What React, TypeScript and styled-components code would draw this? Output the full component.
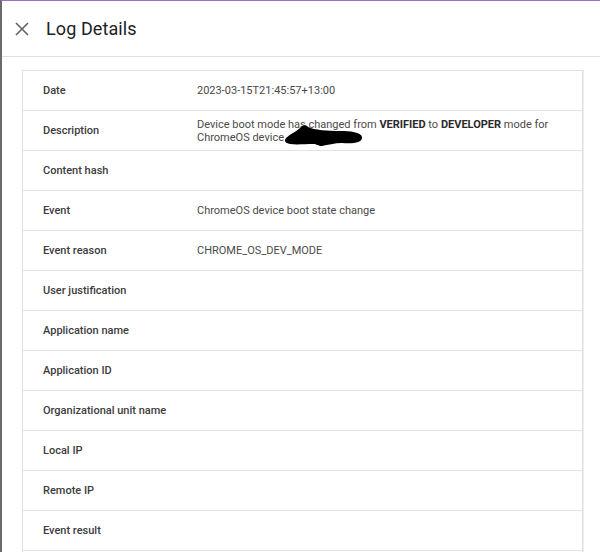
import styled, { createGlobalStyle } from "styled-components";

const GlobalStyle = createGlobalStyle`
  html, body {
    margin: 0;
    padding: 0;
    background: #ffffff;
  }
  body {
    font-family: Roboto, "Liberation Sans", Arial, sans-serif;
  }
`;

const rows: { label: string; value?: React.ReactNode }[] = [
  { label: "Date", value: "2023-03-15T21:45:57+13:00" },
  {
    label: "Description",
    value: (
      <>
        Device boot mode has changed from <b>VERIFIED</b> to <b>DEVELOPER</b> mode for
        <br />
        ChromeOS device <Redacted />
      </>
    ),
  },
  { label: "Content hash" },
  { label: "Event", value: "ChromeOS device boot state change" },
  { label: "Event reason", value: "CHROME_OS_DEV_MODE" },
  { label: "User justification" },
  { label: "Application name" },
  { label: "Application ID" },
  { label: "Organizational unit name" },
  { label: "Local IP" },
  { label: "Remote IP" },
  { label: "Event result" },
  { label: "" },
];

// hand-drawn redaction blob over the device id
function Redacted() {
  return (
    <Scribble>
      <svg width="80" height="24" viewBox="0 0 80 24">
        <path
          d="M2 15 C6 11 12 9 16 5 C18 2 22 1 24 4 C30 7 44 8 56 8 C66 8 77 9 78 14 C79 20 68 21 58 20 C50 20 44 22 38 23 C34 23 33 21 29 21 C22 21 12 22 6 21 C1 20 0 18 2 15 Z"
          fill="#000"
        />
      </svg>
    </Scribble>
  );
}

function App() {
  return (
    <>
      <GlobalStyle />
      <Page>
        <Header>
          <CloseButton aria-label="close">
            <svg width="14" height="14" viewBox="0 0 14 14">
              <path d="M1 1 L13 13 M13 1 L1 13" stroke="#5f6368" strokeWidth="1.6" fill="none" />
            </svg>
          </CloseButton>
          <Title>Log Details</Title>
        </Header>
        <Content>
          <Card>
            {rows.map((r, i) => (
              <Row key={i}>
                <Label>{r.label}</Label>
                <Value>{r.value}</Value>
              </Row>
            ))}
          </Card>
        </Content>
      </Page>
    </>
  );
}

export default App;

const Page = styled.div`
  height: 552px;
  overflow: hidden;
  border-top: 1px solid #9b6fc4;
  border-left: 2px solid #6b6b6b;
  box-sizing: border-box;
  background: #fff;
`;

const Header = styled.div`
  display: flex;
  align-items: center;
  height: 55px;
  padding-left: 13px;
  border-bottom: 1px solid #e0e0e0;
`;

const CloseButton = styled.div`
  display: flex;
  align-items: center;
  justify-content: center;
  width: 14px;
  height: 14px;
  margin-right: 17px;
`;

const Title = styled.div`
  font-size: 18px;
  color: #202124;
  font-weight: 400;
  letter-spacing: 0.1px;
`;

const Content = styled.div`
  padding: 13px 17px 0 20px;
`;

const Card = styled.div`
  border: 1px solid #e0e0e0;
  box-shadow: 1px 0 0 #ededed;
  background: #fff;
`;

const Row = styled.div`
  display: flex;
  align-items: center;
  height: 40px;
  box-sizing: border-box;
  border-bottom: 1px solid #e3e3e3;
  padding-left: 20px;
  font-size: 11px;
`;

const Label = styled.div`
  width: 154px;
  flex-shrink: 0;
  font-weight: 500;
  color: #3c3c3c;
`;

const Value = styled.div`
  color: #4a4a4a;
  line-height: 13px;
  b {
    font-weight: 700;
    color: #2a2a2a;
  }
`;

const Scribble = styled.span`
  position: relative;
  display: inline-block;
  width: 74px;
  height: 10px;
  svg {
    position: absolute;
    left: -3px;
    top: -8px;
  }
`;
